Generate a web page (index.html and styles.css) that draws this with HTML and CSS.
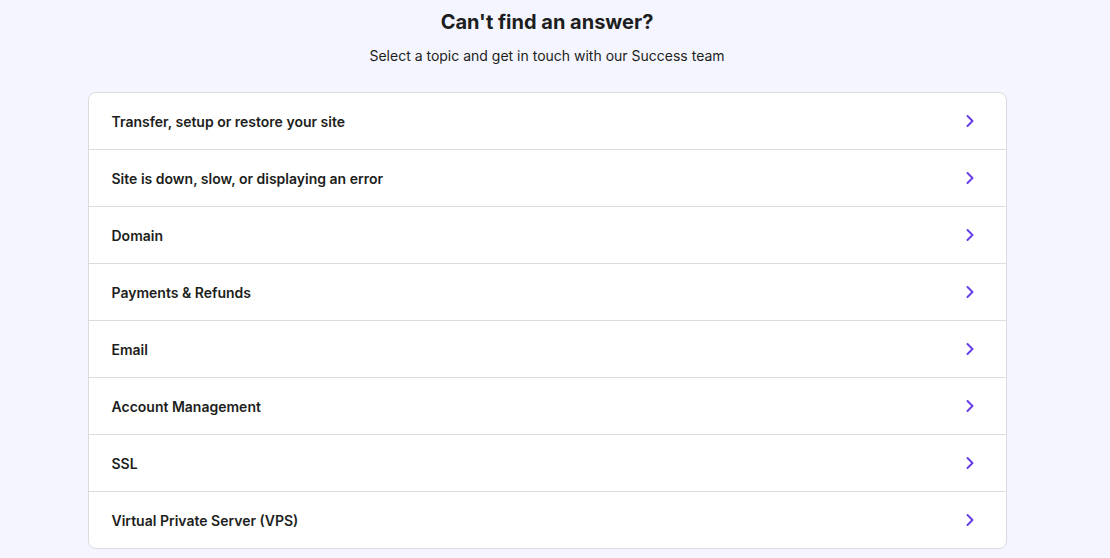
FILE: index.html
```html
<!DOCTYPE html>
<html lang="en">
<head>
    <meta charset="UTF-8">
    <meta name="viewport" content="width=device-width, initial-scale=1.0">
    <title>Can't find an answer?</title>
    <link rel="stylesheet" href="styles.css">
</head>
<body>
    <div class="page">
        <div class="help">
            <h2 class="help-title">Can't find an answer?</h2>
            <p class="help-subtitle">Select a topic and get in touch with our Success team</p>

            <div class="topics">
                <a class="topic" href="#">
                    <span>Transfer, setup or restore your site</span>
                    <svg class="chevron" viewBox="0 0 24 24"><path d="M9.5 7l5 5-5 5"/></svg>
                </a>
                <a class="topic" href="#">
                    <span>Site is down, slow, or displaying an error</span>
                    <svg class="chevron" viewBox="0 0 24 24"><path d="M9.5 7l5 5-5 5"/></svg>
                </a>
                <a class="topic" href="#">
                    <span>Domain</span>
                    <svg class="chevron" viewBox="0 0 24 24"><path d="M9.5 7l5 5-5 5"/></svg>
                </a>
                <a class="topic" href="#">
                    <span>Payments &amp; Refunds</span>
                    <svg class="chevron" viewBox="0 0 24 24"><path d="M9.5 7l5 5-5 5"/></svg>
                </a>
                <a class="topic" href="#">
                    <span>Email</span>
                    <svg class="chevron" viewBox="0 0 24 24"><path d="M9.5 7l5 5-5 5"/></svg>
                </a>
                <a class="topic" href="#">
                    <span>Account Management</span>
                    <svg class="chevron" viewBox="0 0 24 24"><path d="M9.5 7l5 5-5 5"/></svg>
                </a>
                <a class="topic" href="#">
                    <span>SSL</span>
                    <svg class="chevron" viewBox="0 0 24 24"><path d="M9.5 7l5 5-5 5"/></svg>
                </a>
                <a class="topic" href="#">
                    <span>Virtual Private Server (VPS)</span>
                    <svg class="chevron" viewBox="0 0 24 24"><path d="M9.5 7l5 5-5 5"/></svg>
                </a>
            </div>
        </div>
    </div>
</body>
</html>
```

FILE: styles.css
```css
body {
    font-family: Inter, "Noto Sans", sans-serif;
    margin: 0;
    padding: 0;
    background-color: #f4f5ff;
    color: #1d1e20;
}

.page {
    width: 1094px;
}

.help {
    width: 919px;
    margin: 0 auto;
    padding-top: 8px;
    text-align: center;
}

.help-title {
    margin: 0;
    font-size: 20px;
    line-height: 28px;
    font-weight: 700;
}

.help-subtitle {
    margin: 8px 0 0;
    font-size: 14px;
    line-height: 24px;
    font-weight: 400;
}

.topics {
    margin-top: 24px;
    background: #fff;
    border: 1px solid #dadce0;
    border-radius: 8px;
    text-align: left;
}

.topic {
    display: flex;
    align-items: center;
    justify-content: space-between;
    height: 56px;
    padding: 0 24px 0 23px;
    border-bottom: 1px solid #dadce0;
    color: #1d1e20;
    font-size: 14px;
    font-weight: 600;
    text-decoration: none;
}

.topic:last-child {
    border-bottom: none;
}

.chevron {
    width: 24px;
    height: 24px;
    fill: none;
    stroke: #673de6;
    stroke-width: 2;
    stroke-linecap: round;
    stroke-linejoin: round;
}
```
